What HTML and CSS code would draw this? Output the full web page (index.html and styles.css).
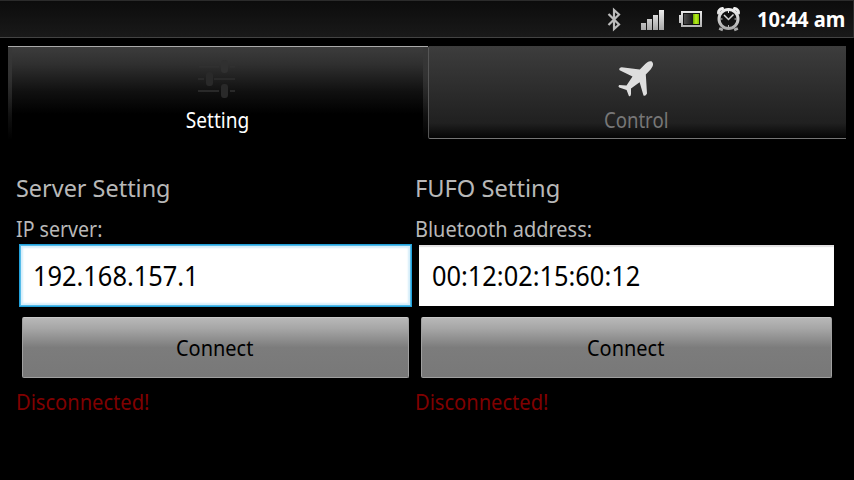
FILE: index.html
```html
<!DOCTYPE html>
<html lang="en">
<head>
<meta charset="utf-8">
<title>FUFO Control</title>
<link rel="stylesheet" href="styles.css">
</head>
<body>
<header class="status">
  <svg class="status-icons" width="142" height="36" viewBox="0 0 142 36">
    <defs>
      <linearGradient id="metal" x1="0" y1="8" x2="0" y2="31" gradientUnits="userSpaceOnUse"><stop offset="0" stop-color="#f4f4f4"/><stop offset="1" stop-color="#a4a4a4"/></linearGradient>
      <linearGradient id="cell"><stop offset="0" stop-color="#4c4c4c"/><stop offset="1" stop-color="#111"/></linearGradient>
      <linearGradient id="charge"><stop offset="0" stop-color="#6faa00"/><stop offset=".5" stop-color="#b8ef1c"/><stop offset="1" stop-color="#82bf00"/></linearGradient>
    </defs>
    <path d="M8.500 14 19 24.500 14 29V10l5 4.500L8.500 25" fill="none" stroke="#bdbdbd" stroke-width="2.200"/>
    <path d="M41 23h5v7h-5zM47 19h5v11h-5zM53 15h5v15h-5zM59 10h5v20h-5z" fill="url(#metal)"/>
    <path d="M81 11h21v16H81v-4h-2v-8h2z" fill="url(#metal)"/>
    <path d="M83 13h17v12H83z" fill="#111"/>
    <path d="M84 14h10v10H84z" fill="url(#cell)"/>
    <path d="M93 14h6v10h-6z" fill="url(#charge)"/>
    <g fill="none" stroke="url(#metal)">
      <circle cx="128.500" cy="19" r="9.500" stroke-width="3"/>
      <path d="M118.500 13q0-3.500 4-4.500M138.500 13q0-3.500-4-4.500" stroke-width="3" stroke-linecap="round"/>
      <path d="M121.500 28l-1 2.500M135.500 28l1 2.500" stroke-width="4"/>
      <path d="m124 15 4.500 4.500 5-5" stroke-width="1.500"/>
      <path d="M128.500 11v2M128.500 25v2M120.500 19h2M134.500 19h2" stroke-width="1"/>
    </g>
  </svg>
  <span class="clock">10:44 am</span>
</header>
<nav class="tabs">
  <div class="tab tab-active">
    <svg width="48" height="48" viewBox="0 0 48 48">
      <g fill="#292929"><path d="M5 24h6v2H5zM21 24h21v2H21zM5 36h21v2H5zM37 36h5v2h-5z"/><rect x="13" y="18" width="7" height="14" rx="3"/><rect x="28" y="30" width="7" height="14" rx="3"/></g>
      <g fill="#303030"><path d="M6 12h20v1.500H6zM37 12h5v1.500h-5z"/><rect x="28" y="6" width="7" height="13" rx="3"/></g>
    </svg>
    <span class="tab-label">Setting</span>
  </div>
  <div class="tab tab-idle">
    <svg width="48" height="48" viewBox="0 0 48 48">
      <path d="M39.500 7.300C37 6.500 34.500 8.700 33 10.200L27.800 15.600 9.600 13.200Q6.200 14.200 7.600 16.200L20.500 22.600 14.500 31.500 7.200 31.100Q5.600 32.300 7.200 33.600L14.600 36 16.900 42Q19 43 19 39.800V34.600L27.600 28.200 31.500 41.500Q33.500 42.600 35 39.500L33.800 20.600 38.600 15.500C40.500 13.400 42.500 9.500 39.500 7.300Z" fill="#dedede"/>
    </svg>
    <span class="tab-label">Control</span>
  </div>
</nav>
<main class="panels">
  <section class="panel server">
    <h2><span class="fit-title">Server Setting</span></h2>
    <label><span class="fit-label">IP server:</span></label>
    <div class="field focused"><span class="fit-ip">192.168.157.1</span></div>
    <div class="button"><span class="fit-button">Connect</span></div>
    <p><span class="fit-status">Disconnected!</span></p>
  </section>
  <section class="panel fufo">
    <h2><span class="fit-title">FUFO Setting</span></h2>
    <label><span class="fit-label">Bluetooth address:</span></label>
    <div class="field"><span class="fit-ip">00:12:02:15:60:12</span></div>
    <div class="button"><span class="fit-button">Connect</span></div>
    <p><span class="fit-status">Disconnected!</span></p>
  </section>
</main>
</body>
</html>
```
FILE: styles.css
```css
* { box-sizing: border-box; }
body {
  margin: 0;
  width: 854px;
  height: 480px;
  overflow: hidden;
  background: #000;
  color: #b8b8b8;
  font: 22px/30px "Noto Sans", sans-serif;
}
span { display: inline-block; white-space: nowrap; transform-origin: left center; }
.status {
  display: flex;
  height: 38px;
  padding-left: 600px;
  border: 1px solid #2b2b2b;
  border-bottom-color: #444;
  border-left: 0;
  background: linear-gradient(#0c0c0c, #191919);
}
.status-icons { flex: none; margin-top: -1px; }
.clock {
  margin-left: 15px;
  color: #fff;
  font-size: 20.500px;
  font-weight: 700;
  line-height: 36px;
  transform: scaleX(.98);
}
.tabs { display: flex; height: 94px; margin: 8px 8px 0; }
.tab { display: flex; flex-direction: column; align-items: center; padding-right: 3px; }
.tab svg { flex: none; margin-top: 8px; }
.tab-label { height: 30px; margin-top: 2px; transform: scaleX(.868); transform-origin: center; }
.tab-active {
  width: 420px;
  border-top: 1px solid #aaa;
  background:
    linear-gradient(#393939, #353535 16%, transparent) left / 4px 100% no-repeat,
    linear-gradient(#393939, #353535 16%, transparent) right / 5px 100% no-repeat,
    linear-gradient(#3c3c3c, #303030 18%, #101010 48%, #000 72%);
  color: #fff;
}
.tab-active svg { margin-top: 7px; }
.tab-active .tab-label { margin-left: 2px; }
.tab-idle {
  width: 418px;
  height: 93px;
  border-left: 1px solid #555;
  border-bottom: 1px solid #747474;
  border-radius: 2px 0 0 2px;
  background: linear-gradient(#3d3d3d, #202020 84%, #050505);
  color: #777;
}
.tab-idle .tab-label { margin-left: 1px; transform: scaleX(.845); }
.panels { display: flex; padding: 32px 8px 0 16px; }
.server { width: 399px; }
.fufo { width: 423px; }
h2 { height: 44px; margin: 0; font-size: 24px; font-weight: 400; line-height: 31px; }
label { display: block; height: 28px; line-height: 25px; }
.field {
  display: flex;
  align-items: center;
  height: 63px;
  margin: 0 3px;
  padding-left: 13px;
  border: 1px solid #000;
  background: #fff;
  color: #000;
  font-size: 27px;
  box-shadow: inset 0 2px 1px #e2e0e2;
}
.focused { border: 1px solid #22a2dc; box-shadow: inset 0 0 0 1px #55bbe8, inset 0 0 2px 3px #d5eefa; }
.button {
  display: flex;
  justify-content: center;
  align-items: center;
  height: 61px;
  margin: 10px 6px 0;
  padding: 0 2px 2px 0;
  border: 1px solid #a0a0a0;
  border-top-color: #c8c8c8;
  border-radius: 2px;
  background: linear-gradient(#b8b8b8, #a6a6a6 18%, #7c7c7c 50%, #787878);
  color: #000;
}
p { margin: 8px 0 0; color: #800000; }
.fit-title { transform: scaleX(.976); }
.fufo .fit-title { transform: scaleX(.986); }
.fit-label { transform: scaleX(.907); }
.server .fit-label { transform: scaleX(.89); }
.fit-ip { transform: scaleX(.94); }
.fit-button { transform: scaleX(.907); transform-origin: center; }
.fit-status { transform: scaleX(.913); }
```
